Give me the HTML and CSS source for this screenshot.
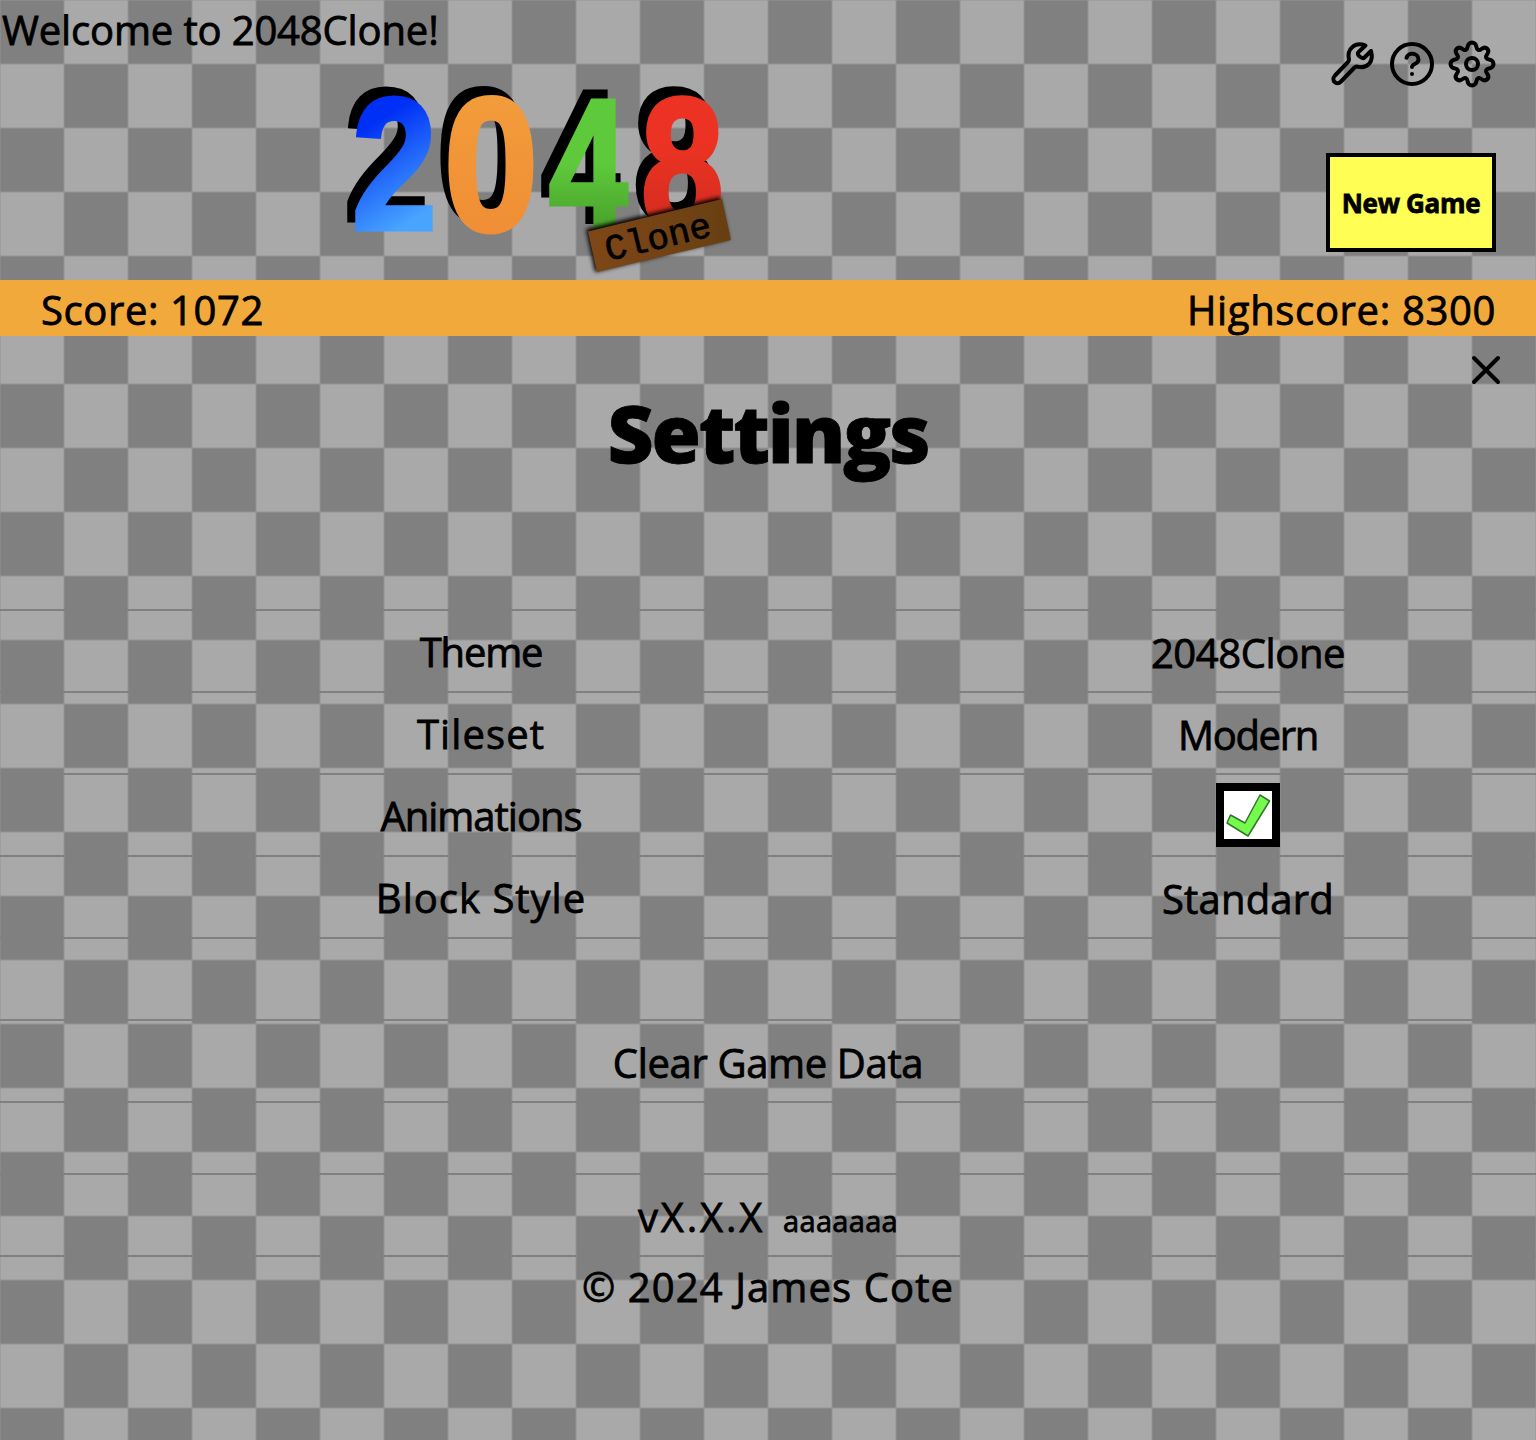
FILE: index.html
```html
<!DOCTYPE html>
<html lang="en">
<head>
<meta charset="utf-8">
<title>2048Clone</title>
<link rel="stylesheet" href="styles.css">
</head>
<body>
<header class="header">
  <p class="welcome"><span class="t-welcome">Welcome to 2048Clone!</span></p>
  <svg class="logo" viewBox="0 0 400 200" role="img" aria-label="2048 Clone">
    <defs>
      <linearGradient id="blue" x1="0" y1="0" x2="0.25" y2="1"><stop offset=".35" stop-color="#0030f5"/><stop offset=".9" stop-color="#48a5ff"/></linearGradient>
      <linearGradient id="orange" x1="0" y1="0" x2="0" y2="1"><stop offset="0" stop-color="#f3a03c"/><stop offset="1" stop-color="#ef8a33"/></linearGradient>
      <linearGradient id="green" x1="0" y1="0" x2="0" y2="1"><stop offset=".5" stop-color="#5dc93b"/><stop offset=".9" stop-color="#439426"/></linearGradient>
      <linearGradient id="red" x1="0" y1="0" x2="0" y2="1"><stop offset=".4" stop-color="#ec3323"/><stop offset="1" stop-color="#c5281c"/></linearGradient>
      <linearGradient id="wood"><stop offset="0" stop-color="#7f4718"/><stop offset="1" stop-color="#683f12"/></linearGradient>
      <filter id="soft" x="-20%" y="-20%" width="140%" height="140%"><feGaussianBlur stdDeviation="2"/></filter>
    </defs>
    <g class="digits">
      <text class="blue" transform="translate(22 158.500) scale(.81 1)">2</text>
      <text class="orange" transform="translate(114 160) scale(.9 1.010)">0</text>
      <text class="green" transform="translate(219 160) scale(.75 1)">4</text>
      <text class="red" transform="translate(311 160) scale(.79 1.010)">8</text>
    </g>
    <path d="M256 159l134-32 9 42-134 33z" filter="url(#soft)"/>
    <path d="M258 161.500L392 129L401 170L267 202z" fill="url(#wood)"/>
    <text class="plate" transform="translate(278 191) rotate(-13.500)">Clone</text>
  </svg>
  <div class="actions">
    <nav class="icons">
      <svg class="icon" viewBox="0 0 48 48"><path d="M37.500 5.500C27 1.500 18.500 9 21 19.500C21 21 20.500 21.500 19.500 22.500L7 35.500C2.500 40.500 8.500 46 13 41.500L26.500 27.500C27.500 26.500 28.500 26.300 30 26.700C40 29 46 21 43 11L36.500 17.500C34.500 19.500 27.500 14.500 30.500 12Z"/></svg>
      <svg class="icon" viewBox="0 0 48 48"><circle cx="24" cy="24" r="20"/><path d="M18.500 17.800C19.500 12 30.500 12.500 30.500 19.500C30.500 24.500 24 23.500 24 27M24 34v.1"/></svg>
      <svg class="icon" viewBox="0 0 48 48"><path d="M19.500 7C20 1 28 1 28.500 7C28.800 10 31 11 33.400 9C38 5.500 42.500 10 39 14.600C37 17 38 19.200 41 19.500C47 20 47 28 41 28.500C38 28.800 37 31 39 33.400C42.500 38 38 42.500 33.400 39C31 37 28.800 38 28.500 41C28 47 20 47 19.500 41C19.200 38 17 37 14.600 39C10 42.500 5.500 38 9 33.400C11 31 10 28.800 7 28.500C1 28 1 20 7 19.500C10 19.200 11 17 9 14.600C5.500 10 10 5.500 14.600 9C17 11 19.200 10 19.500 7Z"/><circle cx="24" cy="24" r="6"/></svg>
    </nav>
    <button class="new-game"><span class="t-new">New Game</span></button>
  </div>
</header>
<div class="scores"><span class="t-score">Score: 1072</span><span class="t-high">Highscore: 8300</span></div>
<main class="settings">
  <div class="close-row"><svg class="close" viewBox="0 0 30 30"><path d="M3 3l24 24M27 3L3 27"/></svg></div>
  <h1><span class="t-title">Settings</span></h1>
  <div class="row"><div class="name"><span class="t-theme">Theme</span></div><div class="value"><span class="t-clone">2048Clone</span></div></div>
  <div class="row"><div class="name"><span class="t-tileset">Tileset</span></div><div class="value"><span class="t-modern">Modern</span></div></div>
  <div class="row"><div class="name"><span class="t-anim">Animations</span></div><div class="value"><svg class="check" viewBox="0 0 64 64"><path class="frame" d="M4 4h56v56H4z"/><path class="tick" d="M14.500 32L11 40L32 53L53.500 18L44 12L29 40Z"/></svg></div></div>
  <div class="row"><div class="name"><span class="t-block">Block Style</span></div><div class="value"><span class="t-standard">Standard</span></div></div>
  <div class="row"></div>
  <div class="row single"><span class="t-clear">Clear Game Data</span></div>
  <div class="row gap"></div>
  <div class="row single version"><span class="t-ver">vX.X.X</span><small class="t-hash">aaaaaaa</small></div>
  <footer class="row single foot"><span class="t-copy">© 2024 James Cote</span></footer>
</main>
</body>
</html>
```
FILE: styles.css
```css
* { box-sizing: border-box; }
body {
  margin: 0;
  min-height: 1440px;
  font: 500 40px/56px "Comic Sans MS", "Open Sans", sans-serif;
  -webkit-text-stroke: .8px #000;
  color: #000;
  background:
    linear-gradient(90deg, rgba(148, 148, 148, .5) 1px, transparent 1px 63px, rgba(148, 148, 148, .5) 63px) 0 0 / 64px 64px,
    linear-gradient(rgba(148, 148, 148, .5) 1px, transparent 1px 63px, rgba(148, 148, 148, .5) 63px) 0 0 / 64px 64px,
    repeating-conic-gradient(#a9a9a9 0 25%, #808080 0 50%) 0 0 / 128px 128px;
}
.header { height: 280px; display: flex; }
.welcome { margin: 2px 0 0 2px; width: 328px; white-space: nowrap; }
.logo { width: 400px; height: 200px; margin-top: 70px; overflow: visible; -webkit-text-stroke: 0; }
.digits { font: 700 188px "Liberation Sans", sans-serif; stroke-width: 5px; filter: drop-shadow(-8px -9px 0 #000); }
.blue { fill: url(#blue); stroke: url(#blue); }
.orange { fill: url(#orange); stroke: url(#orange); }
.green { fill: url(#green); stroke: url(#green); }
.red { fill: url(#red); stroke: url(#red); }
.plate { font: 36px "Liberation Mono", monospace; stroke: #000; stroke-width: .8px; }
.actions { margin: 40px 40px 0 auto; display: flex; flex-direction: column; align-items: flex-end; gap: 65px; }
.icons { display: flex; gap: 12px; height: 48px; }
.icon { width: 48px; height: 48px; fill: none; stroke: #000; stroke-width: 4; stroke-linecap: round; stroke-linejoin: round; }
.new-game { width: 170px; height: 99px; padding: 0; border: 4px solid #000; background: #fffe54; color: #000; font: 700 26px/40px "Comic Sans MS", "Open Sans", sans-serif; white-space: nowrap; }
.scores { height: 56px; padding: 2px 40px 0 41px; display: flex; justify-content: space-between; background: #f2a93b; }
.close-row { height: 49px; padding: 19px 35px 0 0; display: flex; justify-content: flex-end; }
.close { width: 30px; height: 30px; fill: none; stroke: #000; stroke-width: 4; stroke-linecap: round; }
h1 { margin: 0; height: 224px; text-align: center; font-size: 80px; line-height: 94px; font-weight: 800; }
.row { height: 82px; border-top: 2px solid #808080; display: flex; align-items: center; line-height: 80px; white-space: nowrap; }
.name { width: 962px; text-align: center; }
.value { width: 572px; display: flex; justify-content: center; }
.name span, .value span { padding-top: 4px; display: inline-block; line-height: 76px; }
.single { justify-content: center; padding-top: 4px; }
.gap { height: 72px; }
.version { gap: 18px; align-items: baseline; padding-top: 2px; }
.version small { font-size: 29px; }
.check { width: 64px; height: 64px; }
.frame { fill: #fff; stroke: #000; stroke-width: 8px; }
.tick { fill: #75fb4c; stroke: #347330; stroke-width: 1.5px; stroke-linejoin: round; }
.foot { padding: 0 0 20px; }

/* Tracking per label */
.t-welcome { letter-spacing: -.15px; }
.t-score { letter-spacing: .6px; }
.t-high { letter-spacing: .65px; }
.t-title { letter-spacing: -2.2px; }
.t-theme { letter-spacing: -1.2px; }
.t-clone { letter-spacing: -.4px; }
.t-tileset { letter-spacing: 1.1px; }
.t-modern { letter-spacing: -1.3px; }
.t-anim { letter-spacing: -1px; }
.t-block { letter-spacing: 1px; }
.t-standard { letter-spacing: .2px; }
.t-clear { letter-spacing: -.35px; }
.t-ver { letter-spacing: 2.8px; }
.t-hash { letter-spacing: .3px; }
.t-copy { letter-spacing: 1.1px; }
.t-new { letter-spacing: -.3px; }
```
